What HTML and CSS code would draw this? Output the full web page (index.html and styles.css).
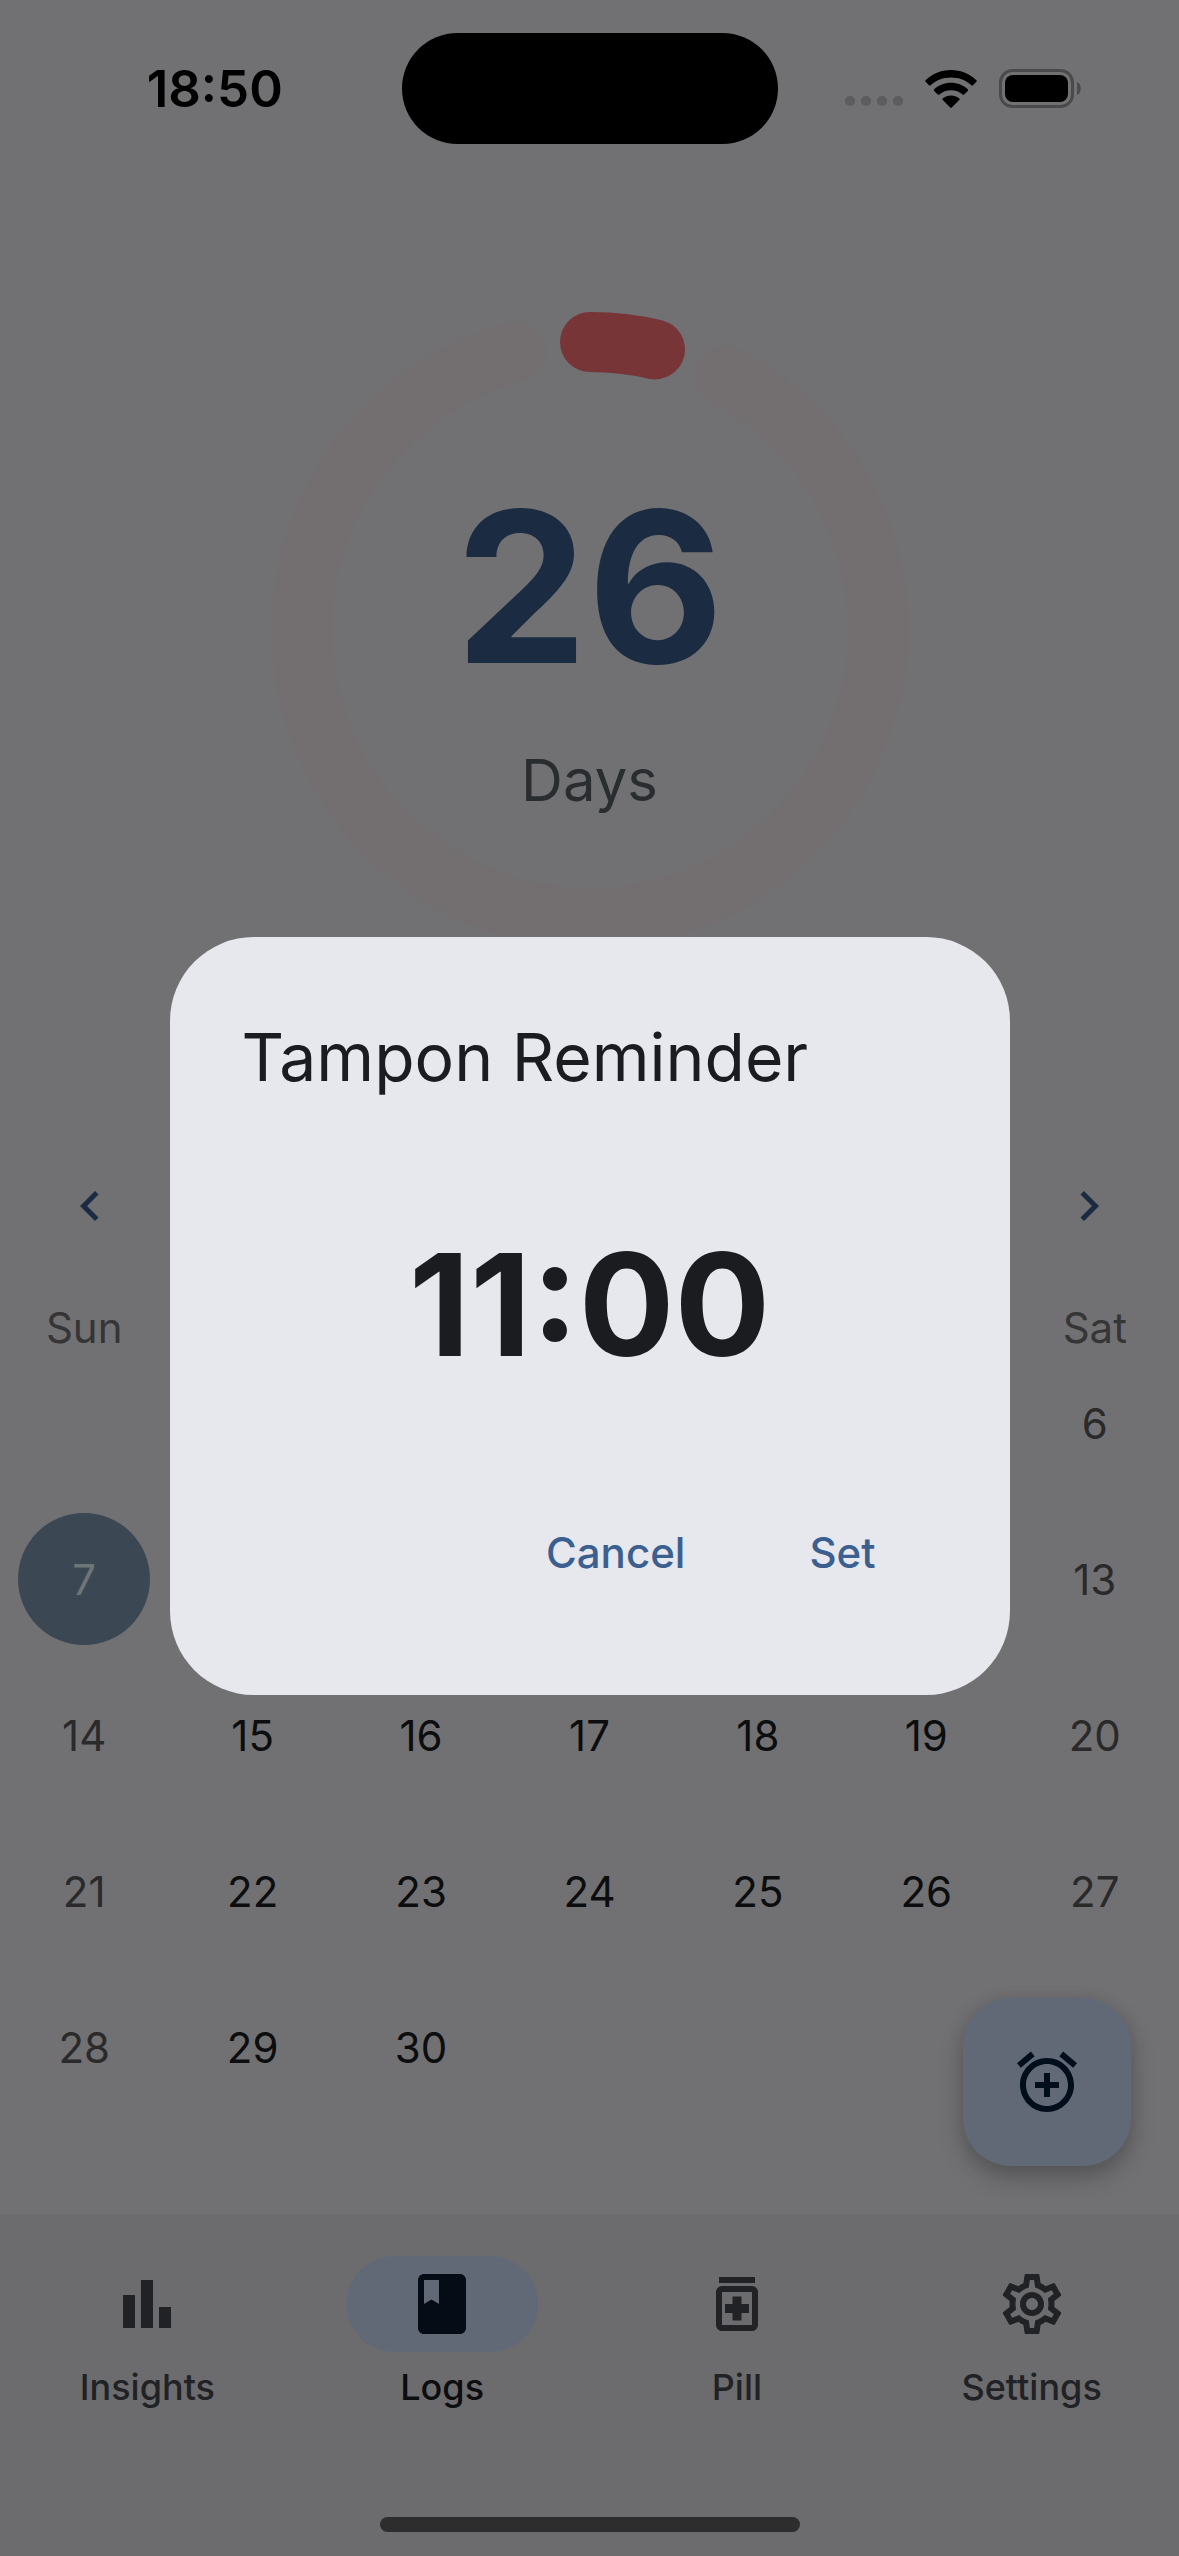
FILE: index.html
```html
<!DOCTYPE html>
<html lang="en">
<head>
<meta charset="utf-8">
<meta name="viewport" content="width=device-width, initial-scale=1">
<title>Logs</title>
<link rel="stylesheet" href="styles.css">
</head>
<body>
<div class="app">
  <header class="status-bar">
    <time class="status-time">18:50</time>
    <div class="island"></div>
    <div class="status-icons">
      <svg class="icon-signal" viewBox="0 0 58 10" aria-hidden="true"><circle cx="5" cy="5" r="5"/><circle cx="21" cy="5" r="5"/><circle cx="37" cy="5" r="5"/><circle cx="53" cy="5" r="5"/></svg>
      <svg class="icon-wifi" viewBox="0 0 52 38" aria-hidden="true">
        <path d="M26 0C36 0 45 4 51.400 10.200Q52.200 11 51.400 11.800L48 15.300Q47.200 16 46.400 15.300C41 10.300 33.800 7.600 26 7.600S11 10.300 5.600 15.300Q4.800 16 4 15.300L.6 11.800Q-.2 11 .6 10.200C7 4 16 0 26 0Z"/>
        <path d="M26 12.800C32.600 12.800 38.500 15.300 42.800 19.300Q43.600 20 42.800 20.900L39.200 24.400Q38.400 25.100 37.600 24.400C34.500 21.700 30.500 20.200 26 20.200S17.500 21.700 14.400 24.400Q13.600 25.100 12.800 24.400L9.200 20.900Q8.400 20 9.200 19.300C13.500 15.300 19.400 12.800 26 12.800Z"/>
        <path d="M26 25.400C29.200 25.400 32 26.500 34.100 28.300Q35 29.100 34.200 30L26.800 37.400Q26 38.100 25.200 37.400L17.800 30Q17 29.100 17.900 28.300C20 26.500 22.800 25.400 26 25.400Z"/>
      </svg>
      <svg class="icon-battery" viewBox="0 0 82 39" aria-hidden="true">
        <rect class="battery-shell" x="1.500" y="1.500" width="72" height="36" rx="12"/>
        <rect x="6" y="6" width="63" height="27" rx="8"/>
        <path class="battery-nub" d="M78 13C83 15 83 24 78 26Z"/>
      </svg>
    </div>
  </header>

  <main class="content">
    <section class="countdown">
      <svg class="ring" viewBox="-318 -318 636 636" aria-hidden="true">
        <path class="ring-rest" d="M135.200 -254.300A288 288 0 1 1 -74.500 -278.200"/>
        <path class="ring-period" d="M0 -288A288 288 0 0 1 65 -280.600"/>
      </svg>
      <div class="countdown-text">
        <strong class="countdown-value">26</strong>
        <span class="countdown-unit">Days</span>
      </div>
    </section>

    <section class="calendar">
      <div class="calendar-header">
        <button class="month-button" type="button" aria-label="Previous month"><svg viewBox="0 0 24 24"><path d="M15.410 7.410L14 6l-6 6 6 6 1.410-1.410L10.830 12z"/></svg></button>
        <button class="month-button" type="button" aria-label="Next month"><svg viewBox="0 0 24 24"><path d="M8.590 16.590L13.170 12 8.590 7.410 10 6l6 6-6 6z"/></svg></button>
      </div>
      <table class="month">
        <thead>
          <tr><th>Sun</th><th></th><th></th><th></th><th></th><th></th><th>Sat</th></tr>
        </thead>
        <tbody>
          <tr><td></td><td></td><td></td><td></td><td></td><td></td><td>6</td></tr>
          <tr><td><span class="today">7</span></td><td></td><td></td><td></td><td></td><td></td><td>13</td></tr>
          <tr><td>14</td><td>15</td><td>16</td><td>17</td><td>18</td><td>19</td><td>20</td></tr>
          <tr><td>21</td><td>22</td><td>23</td><td>24</td><td>25</td><td>26</td><td>27</td></tr>
          <tr><td>28</td><td>29</td><td>30</td><td></td><td></td><td></td><td></td></tr>
        </tbody>
      </table>
    </section>

    <button class="fab" type="button" aria-label="Add reminder">
      <svg viewBox="0 0 24 24"><path d="M7.880 3.390L6.600 1.860 2 5.710l1.290 1.530 4.590-3.850zM22 5.720l-4.600-3.860-1.290 1.530 4.600 3.860L22 5.720zM12 4c-4.970 0-9 4.030-9 9s4.020 9 9 9c4.970 0 9-4.030 9-9s-4.030-9-9-9zm0 16c-3.870 0-7-3.130-7-7s3.130-7 7-7 7 3.130 7 7-3.130 7-7 7zm1-11h-2v3H8v2h3v3h2v-3h3v-2h-3V9z"/></svg>
    </button>
  </main>

  <footer class="bottom-bar">
    <nav class="tabs">
      <a class="tab" href="#insights">
        <span class="tab-icon"><svg viewBox="0 0 24 24"><path d="M4 9h4v11H4zm12 4h4v7h-4zm-6-9h4v16h-4z"/></svg></span>
        <span>Insights</span>
      </a>
      <a class="tab tab-active" href="#logs" aria-current="page">
        <span class="tab-icon"><svg viewBox="0 0 24 24"><path d="M18 2H6c-1.100 0-2 .9-2 2v16c0 1.100.9 2 2 2h12c1.100 0 2-.9 2-2V4c0-1.100-.9-2-2-2zM6 4h5v8l-2.500-1.500L6 12V4z"/></svg></span>
        <span>Logs</span>
      </a>
      <a class="tab" href="#pill">
        <span class="tab-icon"><svg viewBox="0 0 24 24"><path d="M10.500 15H8v-3h2.500V9.500h3V12H16v3h-2.500v2.500h-3V15zM19 8v11c0 1.100-.9 2-2 2H7c-1.100 0-2-.9-2-2V8c0-1.100.9-2 2-2h10c1.100 0 2 .9 2 2zm-2 0H7v11h10V8zM18 3H6v2h12V3z"/></svg></span>
        <span>Pill</span>
      </a>
      <a class="tab" href="#settings">
        <span class="tab-icon"><svg viewBox="0 0 24 24"><path d="M19.430 12.980c.04-.32.07-.64.07-.98 0-.34-.03-.66-.07-.98l2.110-1.650c.19-.15.24-.42.12-.64l-2-3.460c-.09-.16-.26-.25-.44-.25-.06 0-.12.01-.17.03l-2.490 1c-.52-.4-1.080-.73-1.690-.98l-.38-2.650C14.460 2.180 14.250 2 14 2h-4c-.25 0-.46.18-.49.42l-.38 2.650c-.61.25-1.170.59-1.690.98l-2.490-1c-.06-.02-.12-.03-.18-.03-.17 0-.34.09-.43.25l-2 3.460c-.13.22-.07.49.12.64l2.110 1.650c-.04.32-.07.65-.07.98 0 .33.03.66.07.98l-2.110 1.650c-.19.15-.24.42-.12.64l2 3.460c.09.16.26.25.44.25.06 0 .12-.01.17-.03l2.490-1c.52.4 1.080.73 1.690.98l.38 2.650c.03.24.24.42.49.42h4c.25 0 .46-.18.49-.42l.38-2.650c.61-.25 1.170-.59 1.690-.98l2.490 1c.06.02.12.03.18.03.17 0 .34-.09.43-.25l2-3.460c.12-.22.07-.49-.12-.64l-2.110-1.650zm-1.980-1.710c.04.31.05.52.05.73 0 .21-.02.43-.05.73l-.14 1.130.89.7 1.080.84-.7 1.210-1.270-.51-1.040-.42-.9.68c-.43.32-.84.56-1.250.73l-1.060.43-.16 1.130-.2 1.350h-1.400l-.19-1.350-.16-1.130-1.060-.43c-.43-.18-.83-.41-1.230-.71l-.91-.7-1.060.43-1.270.51-.7-1.210 1.080-.84.89-.7-.14-1.130c-.03-.31-.05-.54-.05-.74s.02-.43.05-.73l.14-1.130-.89-.7-1.080-.84.7-1.210 1.270.51 1.040.42.9-.68c.43-.32.84-.56 1.250-.73l1.060-.43.16-1.130.2-1.350h1.390l.19 1.350.16 1.130 1.060.43c.43.18.83.41 1.230.71l.91.7 1.060-.43 1.270-.51.7 1.210-1.070.85-.89.7.14 1.130zM12 8c-2.210 0-4 1.790-4 4s1.790 4 4 4 4-1.790 4-4-1.790-4-4-4zm0 6c-1.100 0-2-.9-2-2s.9-2 2-2 2 .9 2 2-.9 2-2 2z"/></svg></span>
        <span>Settings</span>
      </a>
    </nav>
    <div class="home-indicator"></div>
  </footer>
</div>

<div class="overlay">
  <section class="dialog" role="dialog" aria-modal="true" aria-labelledby="dialog-title">
    <h1 class="dialog-title" id="dialog-title">Tampon Reminder</h1>
    <time class="dialog-time">11:00</time>
    <div class="dialog-actions">
      <button class="text-button" type="button">Cancel</button>
      <button class="text-button" type="button">Set</button>
    </div>
  </section>
</div>
</body>
</html>
```
FILE: styles.css
```css
* {
  box-sizing: border-box;
}

body {
  margin: 0;
  background: #717173;
  color: #0c0d0e;
  font-family: Inter, Roboto, sans-serif;
}

button {
  border: 0;
  padding: 0;
  background: none;
  color: inherit;
  font: inherit;
  cursor: pointer;
}

svg {
  display: block;
  fill: currentColor;
}

.app {
  display: flex;
  flex-direction: column;
  min-height: 100vh;
}

/* Status bar */

.status-bar {
  display: grid;
  grid-template-columns: 1fr 376px 1fr;
  align-items: center;
  height: 177px;
  color: #000;
}

.status-time {
  padding-left: 28px;
  font-size: 51px;
  font-weight: 600;
  line-height: 60px;
  text-align: center;
}

.island {
  height: 111px;
  border-radius: 56px;
  background: #000;
}

.status-icons {
  display: flex;
  align-items: center;
  justify-content: flex-end;
  gap: 22px;
  padding-right: 98px;
}

.icon-signal {
  width: 58px;
  align-self: flex-end;
  margin-bottom: 2px;
  fill: #5d5d5f;
}

.icon-wifi {
  width: 52px;
}

.icon-battery {
  width: 82px;
}

.battery-shell {
  fill: none;
  stroke: #4a4a4b;
  stroke-width: 3;
}

.battery-nub {
  fill: #4a4a4b;
}

/* Countdown ring */

.content {
  position: relative;
  flex: 1;
  padding-top: 135px;
}

.countdown {
  display: grid;
  justify-content: center;
  margin-bottom: 186px;
}

.ring,
.countdown-text {
  grid-area: 1 / 1;
}

.ring {
  width: 636px;
}

.ring path {
  fill: none;
  stroke-width: 60;
  stroke-linecap: round;
}

.ring .ring-rest {
  stroke: #736e6f;
}

.ring .ring-period {
  stroke: #773538;
}

.countdown-text {
  display: flex;
  flex-direction: column;
  align-items: center;
  padding-top: 149px;
}

.countdown-value {
  color: #1b2c42;
  font-size: 210px;
  font-weight: 700;
  line-height: 252px;
}

.countdown-unit {
  margin-top: 33px;
  color: #2a2d30;
  font-size: 58px;
  line-height: 68px;
}

/* Calendar */

.calendar-header {
  display: flex;
  justify-content: space-between;
  margin-bottom: 33px;
  padding: 0 18px;
  color: #1b2c42;
}

.month-button {
  display: grid;
  place-items: center;
  width: 144px;
  height: 144px;
}

.month-button svg {
  width: 60px;
}

.month {
  width: 100%;
  table-layout: fixed;
  border-collapse: collapse;
  font-size: 42px;
  text-align: center;
}

.month th,
.month td {
  padding: 0;
}

.month th {
  height: 34px;
  color: #353536;
  font-weight: 400;
  line-height: 34px;
}

.month td {
  height: 156px;
}

.month td:first-child,
.month td:last-child {
  color: #2a2a2b;
}

.month .today {
  display: grid;
  place-items: center;
  width: 132px;
  height: 132px;
  margin: 0 auto;
  border-radius: 50%;
  background: #3c4754;
  color: #6d7677;
}

.fab {
  position: absolute;
  right: 48px;
  bottom: 48px;
  display: grid;
  place-items: center;
  width: 168px;
  height: 168px;
  border-radius: 48px;
  background: #626976;
  box-shadow: 0 12px 24px rgba(0, 0, 0, 0.22), 0 2px 18px rgba(0, 0, 0, 0.08);
  color: #000d1a;
}

.fab svg,
.tab-icon svg {
  width: 72px;
}

/* Bottom navigation */

.bottom-bar {
  display: flex;
  flex-direction: column;
  justify-content: space-between;
  align-items: center;
  height: 342px;
  padding: 42px 0 24px;
  background: #6c6c6e;
}

.tabs {
  display: flex;
  align-self: stretch;
}

.tab {
  display: flex;
  flex: 1;
  flex-direction: column;
  align-items: center;
  gap: 14px;
  color: #202225;
  font-size: 36px;
  font-weight: 500;
  line-height: 42px;
  text-decoration: none;
}

.tab-icon {
  display: grid;
  place-items: center;
  width: 192px;
  height: 96px;
  border-radius: 48px;
}

.tab-active {
  color: #0c0d0e;
}

.tab-active .tab-icon {
  background: #626976;
  color: #050c16;
}

.home-indicator {
  width: 420px;
  height: 15px;
  border-radius: 8px;
  background: #2d2d2d;
}

/* Reminder dialog */

.overlay {
  position: fixed;
  inset: 0;
  display: grid;
  place-items: center;
  padding: 177px 48px 102px;
}

.dialog {
  display: flex;
  flex-direction: column;
  width: 100%;
  max-width: 840px;
  padding: 72px 72px 70px;
  border-radius: 84px;
  background: #e7e8ee;
  color: #1b1c20;
}

.dialog-title {
  margin: 0;
  font-size: 66px;
  font-weight: 400;
  line-height: 96px;
}

.dialog-time {
  margin: 115px 0 69px;
  font-size: 142px;
  font-weight: 700;
  line-height: 168px;
  text-align: center;
}

.dialog-actions {
  display: flex;
  justify-content: flex-end;
  gap: 48px;
  padding: 24px 24px 0;
}

.text-button {
  height: 144px;
  padding: 0 38px;
  color: #3b6090;
  font-size: 42px;
  font-weight: 500;
}
```
